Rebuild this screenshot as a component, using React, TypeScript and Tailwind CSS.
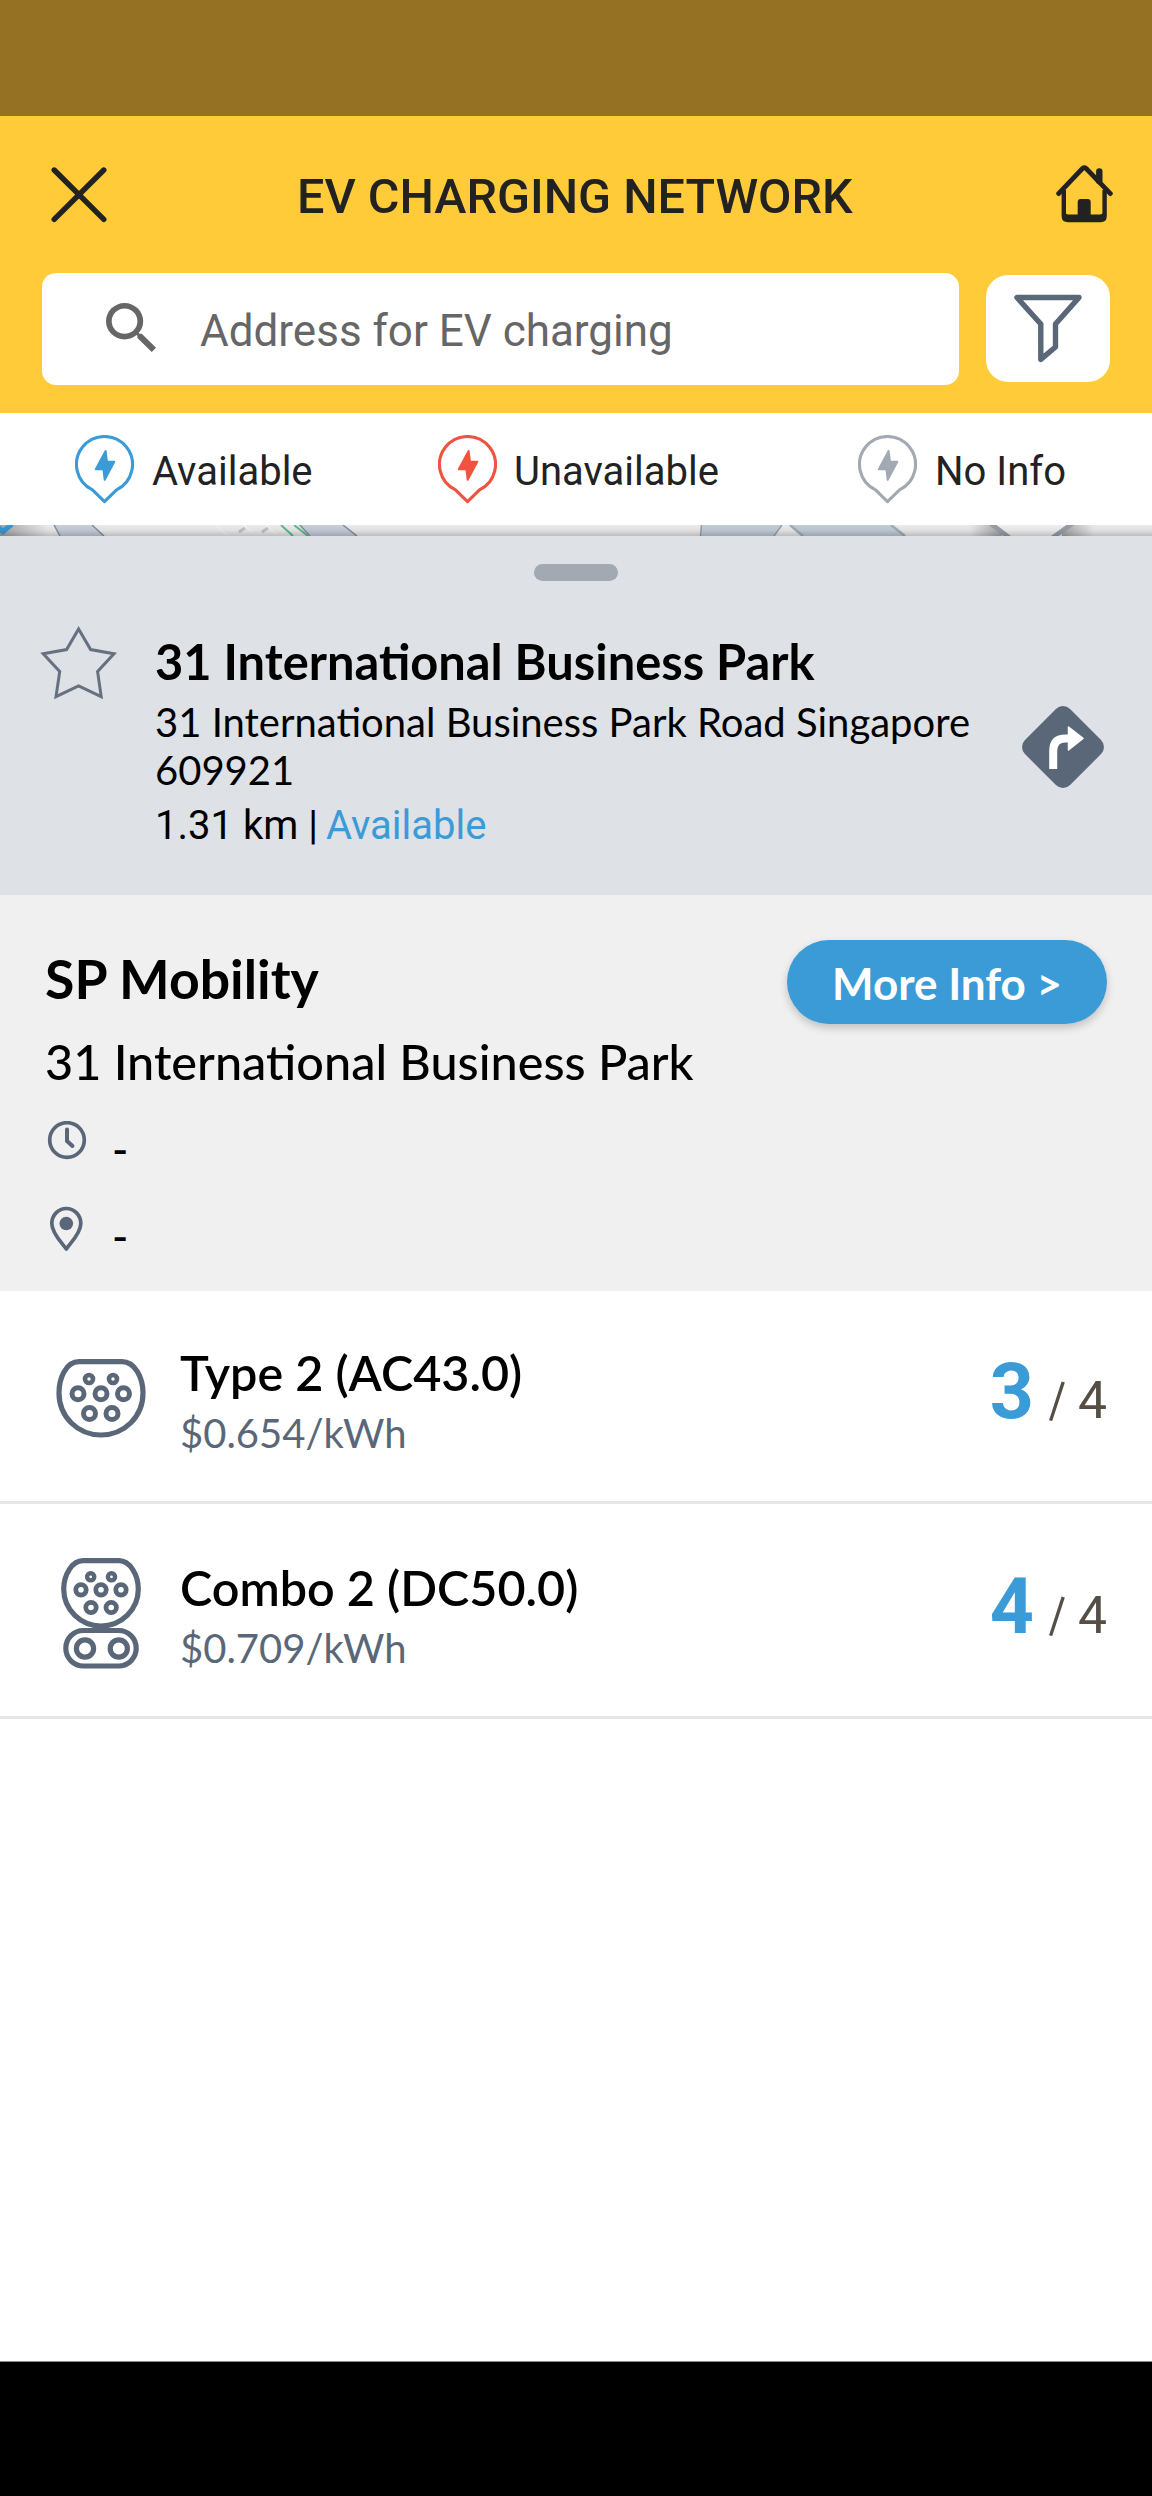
import type { ReactNode } from "react";

function PinIcon({ color }: { color: string }) {
  return (
    <svg width="59" height="69" viewBox="0 0 59 69" fill="none">
      <path
        d="M17.5 54.8 A28 28 0 1 1 41.5 54.8 L29.5 66.6 Z"
        stroke={color}
        strokeWidth="3.1"
        strokeLinejoin="round"
      />
      <path
        d="M30.6 16 L32 26.8 H39.3 L29.7 44.8 L28.4 34.2 H20.8 Z"
        fill={color}
        stroke={color}
        strokeWidth="2"
        strokeLinejoin="round"
      />
    </svg>
  );
}

function Legend({ color, label, className }: { color: string; label: string; className: string }) {
  return (
    <div className={`flex items-start pt-[22px] ${className}`}>
      <PinIcon color={color} />
      <span className="mt-[13px] whitespace-nowrap font-[Roboto] text-[40px] leading-[48px] text-[#222]">{label}</span>
    </div>
  );
}

function MapStrip() {
  return (
    <svg width="1152" height="11" viewBox="0 525 1152 11" className="block">
      <defs>
        <linearGradient id="shade" x1="0" y1="0" x2="0" y2="1">
          <stop offset="0" stopColor="#000" stopOpacity="0.03" />
          <stop offset="0.5" stopColor="#000" stopOpacity="0.08" />
          <stop offset="1" stopColor="#000" stopOpacity="0.22" />
        </linearGradient>
        <linearGradient id="halo" x1="0" y1="0" x2="1" y2="0">
          <stop offset="0" stopColor="#000" stopOpacity="0.3" />
          <stop offset="1" stopColor="#000" stopOpacity="0" />
        </linearGradient>
        <linearGradient id="haloLeft" x1="1" y1="0" x2="0" y2="0">
          <stop offset="0" stopColor="#000" stopOpacity="0.3" />
          <stop offset="1" stopColor="#000" stopOpacity="0" />
        </linearGradient>
      </defs>
      <rect y="525" width="1152" height="11" fill="#f2f2f2" />
      <rect y="525" width="48" height="11" fill="url(#halo)" />
      <path d="M-6 524 L3 531.5 L12 524" stroke="#3a9bd7" strokeWidth="5" fill="none" />
      <path d="M54 525 H92 L104 536 H60 Z" fill="#ccd5e2" />
      <path d="M54 525 L60 536 M92 525 L104 536" stroke="#8a93a3" strokeWidth="1.5" />
      <path d="M216 525 L228 536 M244 525 L252 532 M266 525 L276 534" stroke="#fff" strokeWidth="1" />
      <path d="M239 532 L245 528 M262 532 L268 528" stroke="#c8c8c8" strokeWidth="3" />
      <path d="M298 525 H343 L357 536 H309 Z" fill="#ccd5e2" />
      <path d="M300 525 L310 536 M343 525 L357 536" stroke="#8a93a3" strokeWidth="1.5" />
      <path d="M281 525 L293 536 M294 525 L308 536" stroke="#5fbf97" strokeWidth="2" />
      <path d="M701 525 H782 L774 536 H700 Z" fill="#c8d3de" />
      <path d="M701.5 525 L700.5 536 M782 525 L774 536" stroke="#9aa7b3" strokeWidth="1.5" />
      <path d="M789 525 H891 L905 536 H803 Z" fill="#c8d3de" />
      <path d="M790 525 L803 536 M891 525 L905 536" stroke="#a5b3bf" strokeWidth="2.5" />
      <rect x="970" y="525" width="32" height="11" fill="url(#haloLeft)" />
      <rect x="1062" y="525" width="32" height="11" fill="url(#halo)" />
      <path d="M990 525 L1008 536 H1053 L1072 525 Z" fill="#f6f6f6" />
      <path d="M990 523 L1010 538 M1073 523 L1052 538" stroke="#9aa3af" strokeWidth="4.5" />
      <rect y="525" width="1152" height="11" fill="url(#shade)" />
    </svg>
  );
}

function Socket({ cx, cy, r, w }: { cx: number; cy: number; r: number; w: number }) {
  return <circle cx={cx} cy={cy} r={r} strokeWidth={w} />;
}

function Type2Icon() {
  return (
    <svg width="90" height="79" viewBox="0 0 90 79" fill="none" stroke="#5a6778" className="-mt-[3px]">
      <path
        d="M23 2.7 H66 C79 2.7 87 19 87 34 C87 58 68 76 45 76 C22 76 3 58 3 34 C3 19 10 2.7 23 2.7 Z"
        strokeWidth="5.2"
      />
      <Socket cx={33} cy={20} r={4} w={4.6} />
      <Socket cx={57} cy={20} r={4} w={4.6} />
      <Socket cx={22} cy={34.7} r={6} w={5} />
      <Socket cx={45} cy={34.7} r={6} w={5} />
      <Socket cx={67.5} cy={34.7} r={6} w={5} />
      <Socket cx={33.5} cy={54.4} r={6} w={5} />
      <Socket cx={56} cy={54.4} r={6} w={5} />
    </svg>
  );
}

function ComboIcon() {
  return (
    <svg width="90" height="111" viewBox="-5 0 90 111" fill="none" stroke="#5a6778" className="-mt-[3px]">
      <path
        d="M22 2.7 H58 C69 2.7 77.3 17 77.3 31 C77.3 52 60 68 40 68 C20 68 2.7 52 2.7 31 C2.7 17 11 2.7 22 2.7 Z"
        strokeWidth="5.2"
      />
      <Socket cx={29.7} cy={18.8} r={3.6} w={4.4} />
      <Socket cx={50.5} cy={18.8} r={3.6} w={4.4} />
      <Socket cx={20} cy={31.8} r={5.2} w={4.8} />
      <Socket cx={40} cy={31.8} r={5.2} w={4.8} />
      <Socket cx={60} cy={31.8} r={5.2} w={4.8} />
      <Socket cx={30} cy={49.5} r={5.2} w={4.8} />
      <Socket cx={50.2} cy={49.5} r={5.2} w={4.8} />
      <rect x="4.8" y="72.5" width="70.4" height="35.5" rx="17.7" strokeWidth="5.2" />
      <Socket cx={24} cy={90.5} r={8.6} w={5.2} />
      <Socket cx={57.8} cy={90.5} r={8.6} w={5.2} />
    </svg>
  );
}

function ChargerRow({
  icon,
  name,
  price,
  free,
  total,
  className,
}: {
  icon: ReactNode;
  name: string;
  price: string;
  free: number;
  total: number;
  className: string;
}) {
  return (
    <div className={`flex items-center border-b-[3px] border-[#e6e6e6] pl-14 pr-[45px] ${className}`}>
      {icon}
      <div className="ml-[34px] flex-1">
        <div className="text-[48.5px] font-semibold leading-[58px] text-black">{name}</div>
        <div className="mt-2 text-[40px] leading-[48px] text-[#5a6778]">{price}</div>
      </div>
      <div className="mt-[43px] flex items-baseline self-start font-[Roboto]">
        <span className="text-[77px] font-bold leading-[100px] text-[#3a9bd7]">{free}</span>
        <span className="ml-[14px] flex w-[18px] justify-center font-['Nunito_Sans'] text-[49px] leading-[50px] text-[#554e45]">/</span>
        <span className="ml-3 text-[51.6px] leading-[50px] text-[#554e45]">{total}</span>
      </div>
    </div>
  );
}

export default function App() {
  return (
    <div className="flex h-[2496px] w-[1152px] flex-col overflow-hidden bg-white font-[Lato]">
      <div className="h-[116px] bg-[#957124]" />

      <header className="h-[297px] bg-[#ffcb38]">
        <div className="flex h-[157px] items-start pl-[51px] pt-[49px]">
          <svg width="56" height="57" viewBox="0 0 56 57" className="mt-px" stroke="#222" strokeWidth="5.4" strokeLinecap="round">
            <path d="M3.2 4 L52.8 53.4 M52.8 4 L3.2 53.4" />
          </svg>
          <h1 className="ml-[190px] mt-1 w-[759px] whitespace-nowrap font-[Roboto] text-[48.5px] font-medium leading-[56px] text-[#222]">
            EV CHARGING NETWORK
          </h1>
          <svg width="57" height="58" viewBox="0 0 57 58" fill="none" stroke="#222">
            <path d="M2.6 28.6 L26.4 3.6 Q28.3 2 30.2 3.6 L54.4 28.6" strokeWidth="4.8" strokeLinecap="round" />
            <path d="M43.3 16 V6.5" strokeWidth="6.4" strokeLinecap="round" />
            <path d="M7.8 25 V51 Q7.8 55 11.8 55 H44.6 Q48.6 55 48.6 51 V25" strokeWidth="4.4" />
            <path d="M8 45 Q9 49.4 12 49.4 H21.7 V37 Q21.7 34 24.7 34 H31.7 Q34.7 34 34.7 37 V49.4 H44 Q48 49 48.5 45 V55 H8 Z" fill="#222" stroke="none" />
          </svg>
        </div>
        <div className="flex items-start pl-[42px]">
          <div className="flex h-[112px] w-[917px] items-start rounded-[14px] bg-white pl-16">
            <svg width="50" height="49" viewBox="3 3 17.49 17.49" className="mt-[30px]" fill="#666" preserveAspectRatio="none">
              <path d="M15.5 14h-.79l-.28-.27A6.471 6.471 0 0 0 16 9.5 6.5 6.5 0 1 0 9.5 16c1.61 0 3.09-.59 4.23-1.57l.27.28v.79l5 4.99L20.49 19l-4.99-5zm-6 0C7.01 14 5 11.99 5 9.5S7.01 5 9.5 5 14 7.01 14 9.5 11.99 14 9.5 14z" />
            </svg>
            <span className="ml-11 mt-8 font-[Roboto] text-[44px] leading-[52px] text-[#666]">Address for EV charging</span>
          </div>
          <div className="ml-[27px] mt-[2px] flex h-[107px] w-[124px] items-start rounded-[22px] bg-white pl-7 pt-[19px]">
            <svg width="68" height="69" viewBox="0 0 68 69" fill="none" stroke="#5a6778" strokeWidth="5.4" strokeLinejoin="round">
              <path d="M3 3.5 H65 L41.5 30 V53 L26.8 65.4 V30 Z" />
            </svg>
          </div>
        </div>
      </header>

      <div className="flex h-[112px] items-start bg-white">
        <Legend color="#3a9bd7" label="Available" className="w-[362px] gap-[18px] pl-[75px]" />
        <Legend color="#f0533f" label="Unavailable" className="w-[421px] gap-[17px] pl-[76px]" />
        <Legend color="#a2a9b3" label="No Info" className="flex-1 gap-[18px] pl-[75px]" />
      </div>
      <MapStrip />

      <section className="h-[359px] bg-[#dee1e6] pt-7">
        <div className="mx-auto h-[17px] w-[84px] rounded-full bg-[#a2a9b3]" />
        <div className="mt-[44px] flex items-start pl-10">
          <svg width="77" height="75" viewBox="0 0 77 75" fill="none" stroke="#657080" strokeWidth="3">
            <path d="M38.6 4 L50.6 24.6 L74 28.8 L57.6 46.6 L61.2 71.6 L38.6 61 L16 71.6 L19.7 46.6 L3.2 28.8 L26.6 24.6 Z" />
          </svg>
          <div className="ml-[38px] mt-[7px] w-[840px]">
            <h2 className="text-[48.8px] font-bold leading-[58px] text-black">31 International Business Park</h2>
            <p className="mt-2 text-[40px] leading-[48px] text-black">
              31 International Business Park Road Singapore 609921
            </p>
            <p className="mt-2 font-[Roboto] text-[40px] leading-[48px] text-black">
              1.31 km | <span className="-ml-[2px] text-[#3a9bd7]">Available</span>
            </p>
          </div>
          <svg width="82" height="82" viewBox="0 0 82 82" className="ml-[27px] mt-[81px]">
            <rect x="9.1" y="9.1" width="63.8" height="63.8" rx="10" fill="#5a6778" transform="rotate(45 41 41)" />
            <path d="M31.2 63 V45 Q31.2 32.6 43.5 32.6 H47" fill="none" stroke="#fff" strokeWidth="8" />
            <path d="M46.5 21 L61 32.3 L46.5 44 Z" fill="#fff" stroke="#fff" strokeWidth="1.5" strokeLinejoin="round" />
          </svg>
        </div>
      </section>

      <section className="flex h-[396px] items-start justify-between bg-[#f0f0f0] pl-[45px] pr-[45px]">
        <div className="pt-[51px]">
          <h3 className="text-[53.6px] font-bold leading-[64px] text-black">SP Mobility</h3>
          <p className="mt-[22px] text-[48.6px] font-medium leading-[58px] text-black">31 International Business Park</p>
          <div className="mt-[31px] flex items-start">
            <svg width="44" height="40" viewBox="0 0 44 40" fill="none" stroke="#5a6778" strokeLinecap="round">
              <circle cx="22" cy="19" r="17.3" strokeWidth="3.7" />
              <path d="M22 8.5 V20 L27.5 25" strokeWidth="4" />
            </svg>
            <span className="ml-[23px] mt-1 text-[44px] font-medium leading-[48px]">-</span>
          </div>
          <div className="mt-[33px] flex items-start">
            <svg width="44" height="46" viewBox="0 0 44 46" fill="none" stroke="#5a6778">
              <path d="M21.3 43 C18.5 38.5 6.8 28 6.8 17.5 A14.5 15 0 0 1 35.8 17.5 C35.8 28 24 38.5 21.3 43 Z" strokeWidth="3.7" strokeLinejoin="round" />
              <circle cx="21.3" cy="17.5" r="6.8" fill="#5a6778" stroke="none" />
            </svg>
            <span className="ml-[23px] mt-[6px] text-[44px] font-medium leading-[48px]">-</span>
          </div>
        </div>
        <button className="mt-[45px] h-[84px] w-[320px] rounded-full bg-[#3a9bd7] text-[44px] font-bold leading-[86px] text-white shadow-[0_4px_8px_rgba(0,0,0,0.2)]">
          More Info &gt;
        </button>
      </section>

      <ChargerRow icon={<Type2Icon />} name="Type 2 (AC43.0)" price="$0.654/kWh" free={3} total={4} className="h-[213px] pt-2" />
      <ChargerRow icon={<ComboIcon />} name="Combo 2 (DC50.0)" price="$0.709/kWh" free={4} total={4} className="h-[215px] pt-[10px]" />

      <div className="flex-1 bg-white" />
      <div className="h-[135px] border-t border-[#8c8c8c] bg-black" />
    </div>
  );
}
